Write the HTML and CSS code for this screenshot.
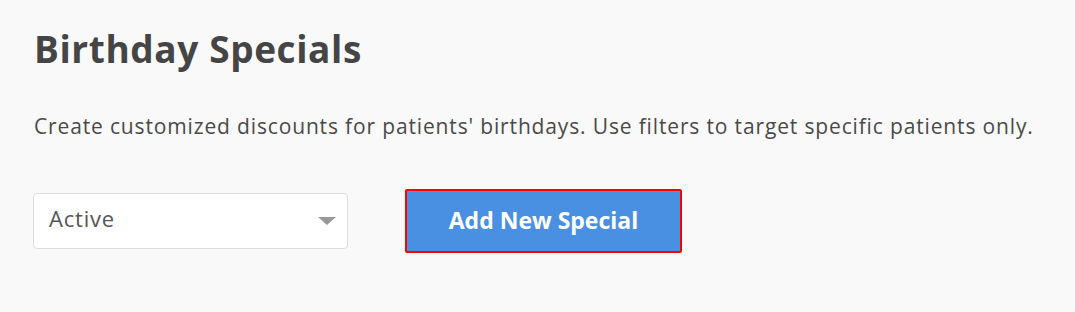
FILE: index.html
```html
<!DOCTYPE html>
<html>
<head>
<meta charset="utf-8">
<link rel="stylesheet" href="styles.css">
</head>
<body>
<main class="page">
  <h1 class="title">Birthday Specials</h1>
  <p class="desc">Create customized discounts for patients' birthdays. Use filters to target specific patients only.</p>
  <div class="controls">
    <div class="select">
      <span class="select-value">Active</span>
      <span class="caret"></span>
    </div>
    <button class="btn-add">Add New Special</button>
  </div>
</main>
</body>
</html>
```
FILE: styles.css
```css
html, body {
  margin: 0;
  padding: 0;
  background: #f9f9f9;
}
body {
  font-family: "Open Sans", "Lato", sans-serif;
  color: #4a4a4a;
}
.page {
  padding: 24px 34px 0 34px;
}
.title {
  margin: 0;
  font-size: 37px;
  font-weight: 700;
  line-height: 50px;
  letter-spacing: 0.6px;
  color: #454545;
}
.desc {
  margin: 36px 0 0 0;
  font-size: 21px;
  line-height: 32px;
  letter-spacing: 0.85px;
  color: #4a4a4a;
}
.controls {
  display: flex;
  align-items: center;
  gap: 57px;
  margin-top: 47px;
}
.select {
  box-sizing: border-box;
  width: 315px;
  height: 56px;
  margin-left: -1px;
  border: 1px solid #dcdcdc;
  border-radius: 4px;
  background: #fff;
  display: flex;
  align-items: center;
  justify-content: space-between;
  padding: 0 11px 0 15px;
}
.select-value {
  font-size: 22px;
  letter-spacing: 0.8px;
  color: #555;
  padding-bottom: 6px;
}
.caret {
  width: 0;
  height: 0;
  border-left: 9px solid transparent;
  border-right: 9px solid transparent;
  border-top: 8px solid #999;
}
.btn-add {
  box-sizing: border-box;
  width: 277px;
  height: 64px;
  border: 2px solid #f00;
  border-radius: 2px;
  background: #4a90e2;
  color: #fff;
  font-family: "Open Sans", "Lato", sans-serif;
  font-size: 23px;
  font-weight: 700;
  padding: 0 0 2px 0;
}
```
